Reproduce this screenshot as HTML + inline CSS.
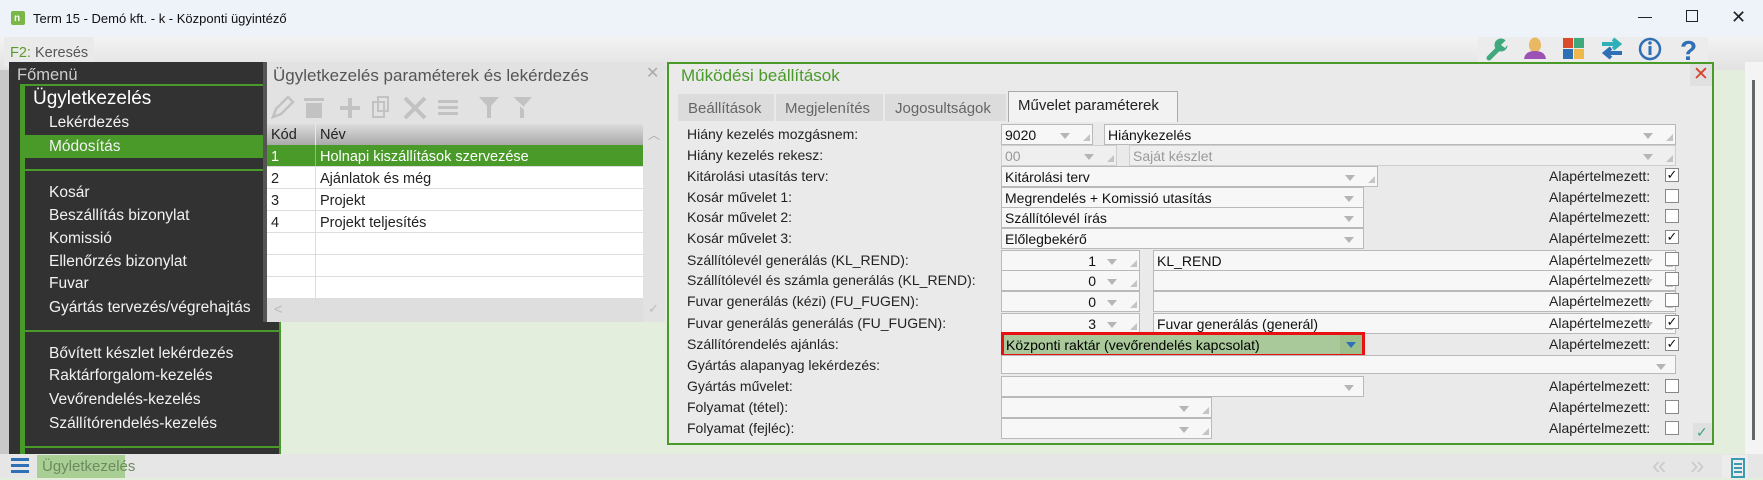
<!DOCTYPE html>
<html><head><meta charset="utf-8"><style>
*{margin:0;padding:0;box-sizing:border-box}
body{width:1763px;height:478px;overflow:hidden;position:relative;font-family:"Liberation Sans",Arial,sans-serif;background:#e3eedd}
.a{position:absolute}
.t{position:absolute;white-space:nowrap;line-height:1}
.menu .t{color:#f2f2f2;font-size:15.5px;left:49px}
.lbl{left:687px;font-size:14px;color:#222}
.f{position:absolute;background:#f7f7f7;border:1px solid #b9b9b9;height:21px;font-size:14px;color:#111;padding:2px 0 0 3px;white-space:nowrap;overflow:hidden}
.f.dis{color:#999;background:#efefef;border-color:#cfcfcf}
.dd::after{content:"";position:absolute;right:9px;top:8px;border:5px solid transparent;border-top:6px solid #b5b5b5;border-bottom:0}
.gr::before{content:"";position:absolute;right:2px;bottom:3px;border-left:7px solid transparent;border-bottom:7px solid #c4c4c4}
.gr.dd::after{right:22px}
.num{text-align:right;padding-right:43px}
.ap{left:1549px;font-size:14px;color:#222}
.cb{position:absolute;left:1665px;width:14px;height:14px;background:#fff;border:1px solid #888;font-size:13px;line-height:12px;text-align:center;color:#111}
.row{position:absolute;left:267px;width:376px;height:22px;border-bottom:1px solid #ddd;background:#fff;font-size:14.5px;color:#222}
.row span{position:absolute;top:4px}
.row i{position:absolute;left:48px;top:0;bottom:0;border-left:1px solid #ddd}
</style></head><body>
<!-- title bar -->
<div class="a" style="left:0;top:0;width:1763px;height:37px;background:#eef2f9"></div>
<div class="a" style="left:11px;top:11px;width:14px;height:14px;background:#7ab648;border-radius:2px"></div>
<div class="t" style="left:14px;top:14px;color:#fff;font-size:10px;font-weight:bold">n</div>
<div class="t" style="left:33px;top:12px;font-size:13px;color:#111">Term 15 - Demó kft. - k - Központi ügyintéző</div>
<div class="a" style="left:1638px;top:17px;width:14px;height:1px;background:#222"></div>
<div class="a" style="left:1686px;top:10px;width:12px;height:12px;border:1.3px solid #222"></div>
<div class="t" style="left:1731px;top:8px;font-size:18px;color:#222">✕</div>
<!-- F2 row -->
<div class="a" style="left:0;top:37px;width:1763px;height:33px;background:linear-gradient(#f3f3f3,#e2e2e2)"></div>
<div class="a" style="left:4px;top:37px;width:90px;height:30px;background:#eaeaea"></div>
<div class="t" style="left:10px;top:46px;font-size:14.5px;color:#555"><span style="color:#5a9a2a">F2:</span> Keresés</div>
<div class="a" style="left:1478px;top:37px;width:230px;height:31px;background:#ececec"></div>
<svg class="a" style="left:1484px;top:36px" width="222" height="26" viewBox="0 0 222 26">
<path d="M5 22 L14 13" stroke="#3fa87d" stroke-width="5" stroke-linecap="round"/>
<circle cx="17" cy="9" r="6.5" fill="#3fa87d"/><path d="M17 9 L24 2 L26 6 L21 12z" fill="#ececec"/>
<ellipse cx="51" cy="9" rx="6" ry="7.5" fill="#e8b862"/><path d="M40 23 q1-8 11-8 q10 0 11 8z" fill="#9b52b4"/>
<rect x="79" y="2" width="10" height="10" fill="#d94b2b"/><rect x="90" y="2" width="10" height="10" fill="#3fa87d"/><rect x="79" y="13" width="10" height="10" fill="#2f6fb5"/><rect x="90" y="13" width="10" height="10" fill="#efb84a"/>
<path d="M118 8 h16 M129 3 l6 5 -6 5" stroke="#2fb0b8" stroke-width="4" fill="none"/><path d="M138 17 h-16 M127 12 l-6 5 6 5" stroke="#2f6fb5" stroke-width="4" fill="none"/>
<circle cx="166" cy="13" r="10" stroke="#2f6fb5" stroke-width="2.5" fill="none"/><rect x="164.5" y="10" width="3" height="9" fill="#2f6fb5"/><circle cx="166" cy="7" r="1.8" fill="#2f6fb5"/>
<text x="196" y="24" font-family="Liberation Sans" font-weight="bold" font-size="28" fill="#2f6fb5">?</text>
</svg>
<!-- left strip -->
<div class="a" style="left:0;top:70px;width:9px;height:384px;background:#c8c8c8"></div>
<!-- dark menu -->
<div class="a" style="left:9px;top:62px;width:272px;height:392px;background:#323232"></div>
<div class="t" style="left:17px;top:67px;font-size:16.5px;color:#ccc">Főmenü</div>
<div class="a" style="left:20px;top:84px;width:261px;height:2px;background:#4a9a2a"></div>
<div class="a" style="left:20px;top:84px;width:5px;height:370px;background:#4a9a2a"></div>
<div class="t" style="left:33px;top:89px;font-size:19px;color:#fff">Ügyletkezelés</div>
<div class="a" style="left:25px;top:135px;width:256px;height:23px;background:#4a9a2a"></div>
<div class="a" style="left:25px;top:169px;width:256px;height:2px;background:#4a9a2a"></div>
<div class="a" style="left:25px;top:330px;width:256px;height:2px;background:#4a9a2a"></div>
<div class="a" style="left:25px;top:446px;width:256px;height:2px;background:#4a9a2a"></div>
<div class="a" style="left:279px;top:322px;width:2px;height:132px;background:#4a9a2a"></div>
<div class="menu">
<div class="t" style="top:115px">Lekérdezés</div>
<div class="t" style="top:139px">Módosítás</div>
<div class="t" style="top:185px">Kosár</div>
<div class="t" style="top:208px">Beszállítás bizonylat</div>
<div class="t" style="top:231px">Komissió</div>
<div class="t" style="top:254px">Ellenőrzés bizonylat</div>
<div class="t" style="top:276px">Fuvar</div>
<div class="t" style="top:300px">Gyártás tervezés/végrehajtás</div>
<div class="t" style="top:346px">Bővített készlet lekérdezés</div>
<div class="t" style="top:368px">Raktárforgalom-kezelés</div>
<div class="t" style="top:392px">Vevőrendelés-kezelés</div>
<div class="t" style="top:416px">Szállítórendelés-kezelés</div>
</div>
<!-- list panel -->
<div class="a" style="left:263px;top:62px;width:402px;height:260px;background:#e2e2e2;border-left:4px solid #555"></div>
<div class="t" style="left:273px;top:67px;font-size:17px;color:#555">Ügyletkezelés paraméterek és lekérdezés</div>
<div class="t" style="left:646px;top:66px;font-size:16px;color:#aaa">✕</div>
<svg class="a" style="left:270px;top:94px" width="270" height="26" viewBox="0 0 270 26" fill="#c2c2c2" stroke="#c2c2c2">
<path d="M3 23 l3-8 12-12 5 5 -12 12z" fill="none" stroke-width="2.5"/>
<rect x="36" y="9" width="16" height="15" stroke="none"/><rect x="34" y="4" width="20" height="3" stroke="none"/>
<rect x="78" y="4" width="4" height="20" stroke="none"/><rect x="70" y="12" width="20" height="4" stroke="none"/>
<rect x="103" y="8" width="11" height="15" fill="none" stroke-width="2"/><rect x="108" y="3" width="10" height="14" fill="none" stroke-width="2"/>
<path d="M135 4 l20 20 M155 4 l-20 20" stroke-width="4"/>
<rect x="168" y="6" width="20" height="3" stroke="none"/><rect x="168" y="12" width="20" height="3" stroke="none"/><rect x="168" y="18" width="20" height="3" stroke="none"/>
<path d="M209 3 h20 l-8 9 v12 h-4 v-12z" stroke="none"/>
<path d="M242 3 h20 l-8 9 v12 h-4 v-12z" stroke="none"/><path d="M242 3 l22 21" stroke="#e2e2e2" stroke-width="2"/>
</svg>
<div class="a" style="left:267px;top:124px;width:376px;height:21px;background:linear-gradient(#dcdcdc,#a9a9a9)"></div>
<div class="a" style="left:315px;top:124px;width:1px;height:21px;background:#e8e8e8"></div>
<div class="t" style="left:271px;top:128px;font-size:14.5px;color:#222">Kód</div>
<div class="t" style="left:320px;top:128px;font-size:14.5px;color:#222">Név</div>
<div class="t" style="left:648px;top:129px;font-size:12px;color:#aaa">︿</div>
<div class="row" style="top:145px;background:#4a9a2a;color:#fff"><span style="left:4px">1</span><i style="border-color:#8ac06a"></i><span style="left:53px">Holnapi kiszállítások szervezése</span></div>
<div class="row" style="top:167px"><span style="left:4px">2</span><i></i><span style="left:53px">Ajánlatok és még</span></div>
<div class="row" style="top:189px"><span style="left:4px">3</span><i></i><span style="left:53px">Projekt</span></div>
<div class="row" style="top:211px"><span style="left:4px">4</span><i></i><span style="left:53px">Projekt teljesítés</span></div>
<div class="row" style="top:233px"><i></i></div>
<div class="row" style="top:255px"><i></i></div>
<div class="row" style="top:277px"><i></i></div>
<div class="a" style="left:267px;top:299px;width:376px;height:23px;background:#dedede"></div>
<div class="t" style="left:274px;top:302px;font-size:15px;color:#bbb">&lt;</div>
<div class="t" style="left:648px;top:302px;font-size:13px;color:#bbb">✓</div>
<!-- right panel -->
<div class="a" style="left:667px;top:62px;width:1047px;height:383px;background:#eaeaea;border:2px solid #4a9a2a"></div>
<div class="t" style="left:681px;top:67px;font-size:17px;color:#4a9a2a">Működési beállítások</div>
<div class="a" style="left:1690px;top:64px;width:22px;height:22px;background:#e0e0e0"></div>
<div class="t" style="left:1693px;top:65px;font-size:19px;color:#d9432b">✕</div>
<div class="a" style="left:678px;top:94px;width:96px;height:27px;background:#dcdcdc"></div>
<div class="a" style="left:776px;top:94px;width:107px;height:27px;background:#dcdcdc"></div>
<div class="a" style="left:885px;top:94px;width:121px;height:27px;background:#dcdcdc"></div>
<div class="a" style="left:1008px;top:91px;width:170px;height:31px;background:#f2f2f2;border:1px solid #aaa;border-bottom:none"></div>
<div class="t" style="left:688px;top:101px;font-size:15px;color:#666">Beállítások</div>
<div class="t" style="left:785px;top:101px;font-size:15px;color:#666">Megjelenítés</div>
<div class="t" style="left:895px;top:101px;font-size:15px;color:#666">Jogosultságok</div>
<div class="t" style="left:1018px;top:98px;font-size:15px;color:#222">Művelet paraméterek</div>

<div class="t lbl" style="top:127px">Hiány kezelés mozgásnem:</div>
<div class="t lbl" style="top:148px">Hiány kezelés rekesz:</div>
<div class="t lbl" style="top:169px">Kitárolási utasítás terv:</div>
<div class="t lbl" style="top:190px">Kosár művelet 1:</div>
<div class="t lbl" style="top:210px">Kosár művelet 2:</div>
<div class="t lbl" style="top:231px">Kosár művelet 3:</div>
<div class="t lbl" style="top:253px">Szállítólevél generálás (KL_REND):</div>
<div class="t lbl" style="top:273px">Szállítólevél és számla generálás (KL_REND):</div>
<div class="t lbl" style="top:294px">Fuvar generálás (kézi) (FU_FUGEN):</div>
<div class="t lbl" style="top:316px">Fuvar generálás generálás (FU_FUGEN):</div>
<div class="t lbl" style="top:337px">Szállítórendelés ajánlás:</div>
<div class="t lbl" style="top:358px">Gyártás alapanyag lekérdezés:</div>
<div class="t lbl" style="top:379px">Gyártás művelet:</div>
<div class="t lbl" style="top:400px">Folyamat (tétel):</div>
<div class="t lbl" style="top:421px">Folyamat (fejléc):</div>

<div class="f dd gr" style="left:1001px;top:124px;width:92px">9020</div>
<div class="f dd gr" style="left:1104px;top:124px;width:572px">Hiánykezelés</div>
<div class="f dd gr dis" style="left:1001px;top:145px;width:116px">00</div>
<div class="f dd gr dis" style="left:1129px;top:145px;width:547px">Saját készlet</div>
<div class="f dd gr" style="left:1001px;top:166px;width:377px">Kitárolási terv</div>
<div class="f dd" style="left:1001px;top:187px;width:363px">Megrendelés + Komissió utasítás</div>
<div class="f dd" style="left:1001px;top:207px;width:363px">Szállítólevél írás</div>
<div class="f dd" style="left:1001px;top:228px;width:363px">Előlegbekérő</div>
<div class="f dd gr num" style="left:1001px;top:250px;width:139px">1</div>
<div class="f dd gr" style="left:1153px;top:250px;width:523px">KL_REND</div>
<div class="f dd gr num" style="left:1001px;top:270px;width:139px">0</div>
<div class="f dd gr" style="left:1153px;top:270px;width:523px"></div>
<div class="f dd gr num" style="left:1001px;top:291px;width:139px">0</div>
<div class="f dd gr" style="left:1153px;top:291px;width:523px"></div>
<div class="f dd gr num" style="left:1001px;top:313px;width:139px">3</div>
<div class="f dd gr" style="left:1153px;top:313px;width:523px">Fuvar generálás (generál)</div>
<div class="a" style="left:1001px;top:332px;width:364px;height:25px;border:3px solid #e81010;background:#a9c99a;font-size:14px;padding:2px 0 0 2px;white-space:nowrap">Központi raktár (vevőrendelés kapcsolat)</div>
<div class="a" style="left:1340px;top:335px;width:22px;height:19px;background:#9cbf8b"></div>
<div class="a" style="left:1346px;top:342px;border:5px solid transparent;border-top:6px solid #2f6fb5;border-bottom:0"></div>
<div class="f dd" style="left:1001px;top:355px;width:675px;height:19px"></div>
<div class="f dd" style="left:1001px;top:376px;width:363px"></div>
<div class="f dd gr" style="left:1001px;top:397px;width:211px"></div>
<div class="f dd gr" style="left:1001px;top:418px;width:211px"></div>

<div class="t ap" style="top:169px">Alapértelmezett:</div><div class="cb" style="top:168px">✓</div>
<div class="t ap" style="top:190px">Alapértelmezett:</div><div class="cb" style="top:189px"></div>
<div class="t ap" style="top:210px">Alapértelmezett:</div><div class="cb" style="top:209px"></div>
<div class="t ap" style="top:231px">Alapértelmezett:</div><div class="cb" style="top:230px">✓</div>
<div class="t ap" style="top:253px">Alapértelmezett:</div><div class="cb" style="top:252px"></div>
<div class="t ap" style="top:273px">Alapértelmezett:</div><div class="cb" style="top:272px"></div>
<div class="t ap" style="top:294px">Alapértelmezett:</div><div class="cb" style="top:293px"></div>
<div class="t ap" style="top:316px">Alapértelmezett:</div><div class="cb" style="top:315px">✓</div>
<div class="t ap" style="top:337px">Alapértelmezett:</div><div class="cb" style="top:337px">✓</div>
<div class="t ap" style="top:379px">Alapértelmezett:</div><div class="cb" style="top:379px"></div>
<div class="t ap" style="top:400px">Alapértelmezett:</div><div class="cb" style="top:400px"></div>
<div class="t ap" style="top:421px">Alapértelmezett:</div><div class="cb" style="top:421px"></div>
<div class="a" style="left:1693px;top:423px;width:19px;height:18px;background:#e0e0e0"></div>
<div class="t" style="left:1696px;top:425px;font-size:14px;color:#3fa87d">✓</div>
<!-- right scroll area -->
<div class="a" style="left:1745px;top:62px;width:18px;height:392px;background:#f4f4f4"></div>
<div class="a" style="left:1752px;top:80px;width:3px;height:360px;background:#666"></div>
<!-- bottom bar -->
<div class="a" style="left:0;top:454px;width:1763px;height:24px;background:#e6e6e6"></div>
<div class="a" style="left:11px;top:458px;width:18px;height:3px;background:#2f6fb5;box-shadow:0 6px 0 #2f6fb5,0 12px 0 #2f6fb5"></div>
<div class="a" style="left:37px;top:455px;width:88px;height:23px;background:#a9cf94"></div>
<div class="t" style="left:42px;top:459px;font-size:15px;color:#6d8a60">Ügyletkezelés</div>
<div class="t" style="left:1652px;top:452px;font-size:26px;color:#ccc">«</div>
<div class="t" style="left:1690px;top:452px;font-size:26px;color:#ccc">»</div>
<div class="a" style="left:1722px;top:455px;width:26px;height:23px;background:#ececec"></div>
<div class="a" style="left:1731px;top:458px;width:14px;height:20px;border:2px solid #3a9ab0"></div>
<div class="a" style="left:1734px;top:463px;width:8px;height:2px;background:#3a9ab0;box-shadow:0 4px 0 #3a9ab0,0 8px 0 #3a9ab0"></div>
</body></html>
